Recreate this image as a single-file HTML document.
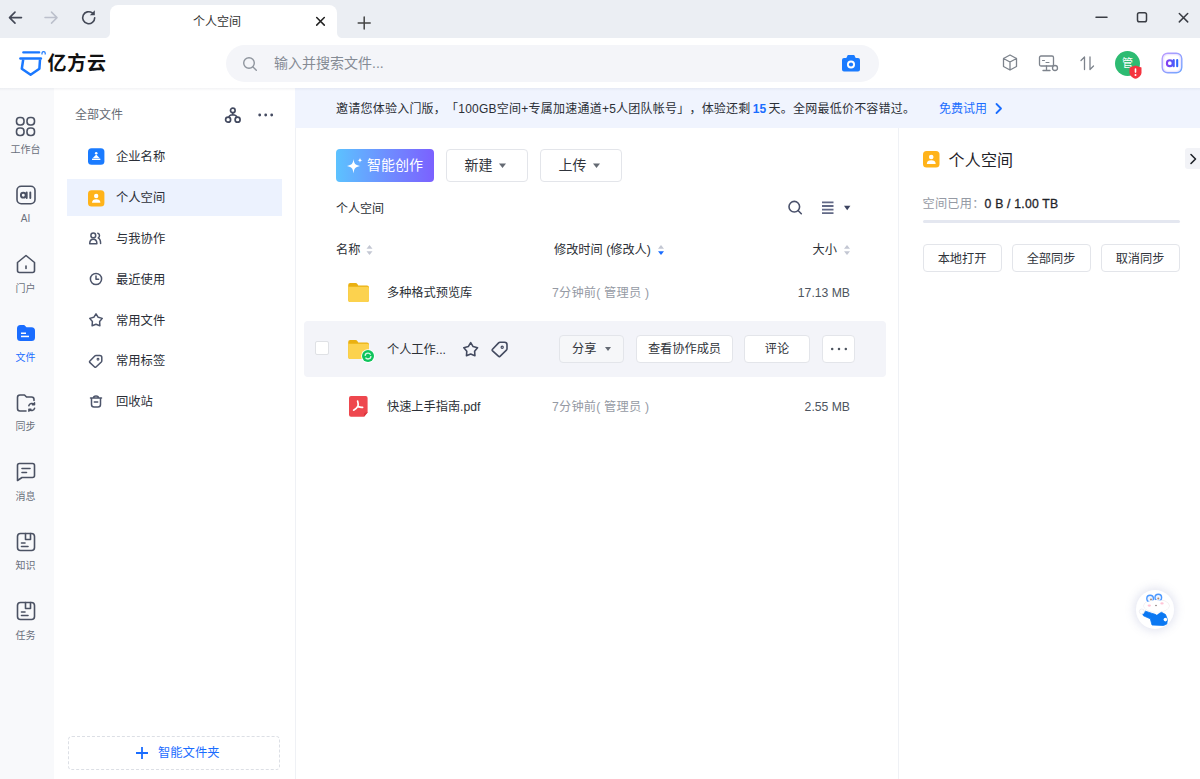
<!DOCTYPE html>
<html lang="zh-CN">
<head>
<meta charset="utf-8">
<title>个人空间</title>
<style>
*{box-sizing:border-box;margin:0;padding:0}
html,body{width:1200px;height:779px;overflow:hidden;background:#fff}
body{text-spacing-trim:space-all;font-family:"Liberation Sans","Noto Sans CJK SC",sans-serif;font-size:12px;color:#1f2329;position:relative}
.abs,.abs-all>*{position:absolute}
svg{position:absolute;overflow:visible}
#chrome{left:0;top:0;width:1200px;height:38px;background:#ebeef3}
#tab{left:110px;top:5px;width:227px;height:33px;background:#fff;border-radius:8px 8px 0 0}
#tab .t{left:0;width:214px;top:9px;text-align:center;font-size:12px;color:#333;line-height:16px}
#header{left:0;top:38px;width:1200px;height:50px;background:#fff}
#logo-t{left:47.500px;top:50.300px;font-size:19px;line-height:28px;font-weight:700;color:#111;letter-spacing:.700px}
#search{left:226px;top:45px;width:653px;height:36.500px;border-radius:19px;background:#f4f5f9}
#search .ph{left:48px;top:9px;font-size:14px;color:#858b95;line-height:18px}
#rail{left:0;top:88px;width:54px;height:691px;background:#f8f9fb}
.rl{left:-1.500px;width:54px;text-align:center;font-size:10px;color:#6a707c;line-height:12px}
.rl.on{color:#1a6dff}
#side{left:54px;top:88px;width:241.500px;height:691px;background:#fff;border-right:1px solid #eff1f5}
#side .hd{left:21px;top:19px;font-size:12px;line-height:16px;color:#646a73}
.si{left:13px;width:215px;height:37px}
.si.on{background:#ecf2fe}
.si .tx{left:49px;top:10px;font-size:12.300px;line-height:18px;color:#2b2f38}
#smart{left:14px;top:647.500px;width:211.500px;height:34px;border:1px dashed #dcdfe5;border-radius:4px}
#smart .tx{left:89px;top:7px;font-size:12.300px;line-height:18px;color:#1a6dff}
#banner{left:295px;top:88px;width:905px;height:39.500px;background:#f0f4fe}
#banner .tx{left:41px;top:12.500px;font-size:12px;line-height:16px;color:#2b2f36;white-space:nowrap;letter-spacing:.230px}
#banner .tx b{font-weight:700;color:#1a6dff;margin:0 -1.500px}
#banner .lk{left:644px;top:12.500px;font-size:12px;line-height:16px;color:#1a6dff}
#main{left:296px;top:128px;width:602px;height:651px;background:#fff}
#right{left:897.500px;top:128px;width:302.500px;height:651px;background:#fff;border-left:1px solid #eff1f5}
.btn{border:1px solid #e3e5ea;border-radius:4px;background:#fff;font-size:12px;color:#30343b;text-align:center;white-space:nowrap}

.tx12{font-size:12px;line-height:18px;white-space:nowrap}
.tx11{font-size:12.200px;line-height:16px;white-space:nowrap;color:#2b2f36;margin-top:.600px}
.tx11.g{color:#959aa4;letter-spacing:.220px}
</style>
</head>
<body>
<div id="chrome" class="abs"></div>
<div id="tab" class="abs"><div class="t abs">个人空间</div></div>
<svg style="left:104px;top:32px" width="240" height="6" fill="#fff"><path d="M0 6H6V0C6 4 4 6 0 6Z"/><path d="M239 6H233V0C233 4 235 6 239 6Z"/></svg>
<!-- nav arrows -->
<svg style="left:0;top:0" width="1200" height="38" fill="none" stroke-linecap="round" stroke-linejoin="round">
 <path d="M21.500 17.600H9.500M15 12.100L9.500 17.600L15 23.100" stroke="#434856" stroke-width="1.600"/>
 <path d="M45 17.600H57M51.500 12.100L57 17.600L51.500 23.100" stroke="#bcc0cc" stroke-width="1.500"/>
 <path d="M94.700 17.700A6 6 0 1 1 92.300 12.900" stroke="#434856" stroke-width="1.600"/><path d="M94.800 10.200V15.200H89.800Z" fill="#434856" stroke="none"/>
 <path d="M316.700 17.500L324.300 25.100M324.300 17.500L316.700 25.100" stroke="#222" stroke-width="1.500"/>
 <path d="M358.200 23H370.200M364.200 17V29" stroke="#444" stroke-width="1.500"/>
 <path d="M1096 17.300H1107" stroke="#3a3d44" stroke-width="1.500"/>
 <rect x="1137.500" y="12.700" width="9" height="9" rx="1.800" stroke="#3a3d44" stroke-width="1.500"/>
 <path d="M1179.300 13.500L1187.700 21.900M1187.700 13.500L1179.300 21.900" stroke="#3a3d44" stroke-width="1.500"/>
</svg>
<div id="header" class="abs"></div>
<!-- logo -->
<svg style="left:18px;top:50.400px" width="30" height="28" viewBox="0 0 30 28" fill="none" stroke="#1a78ff">
 <path d="M5.300 2.400H21.200" stroke-width="2.300" stroke-linecap="round"/>
 <path d="M24 4.500V3Q24 1.600 25.600 1.600Q27.200 1.600 27.200 3V4.500" stroke-width="1.200"/>
 <path d="M2.400 8.500H22.900" stroke-width="2.400" stroke-linecap="round"/>
 <path d="M5.200 9.500L3.800 18.700L12.600 24.700L21.400 18.700L22 9.500" stroke-width="2.500" stroke-linejoin="round"/>
</svg>
<div id="logo-t" class="abs">亿方云</div>
<div id="search" class="abs"><div class="ph abs">输入并搜索文件...</div>
 <svg style="left:16px;top:11px" width="16" height="16" fill="none" stroke="#8f959e" stroke-width="1.400" stroke-linecap="round"><circle cx="7" cy="7" r="5.300"/><path d="M11 11L14.300 14.300"/></svg>
 <svg style="left:615px;top:9px" width="20" height="19" viewBox="0 0 20 19"><path d="M6.800 1h6.400l1.500 3H17a2 2 0 0 1 2 2v9.500a2 2 0 0 1-2 2H3a2 2 0 0 1-2-2V6a2 2 0 0 1 2-2h2.300z" fill="#1a7bff"/><circle cx="10" cy="10.500" r="4" fill="#fff"/><circle cx="10" cy="10.500" r="2.100" fill="#1a7bff"/></svg>
</div>
<!-- header right icons -->
<svg style="left:1000px;top:52px" width="190" height="24" fill="none" stroke="#7d838c" stroke-width="1.300" stroke-linejoin="round" stroke-linecap="round">
 <path d="M10 3L16.500 6.500V14.500L10 18L3.500 14.500V6.500ZM3.500 6.500L10 10L16.500 6.500M10 10V18"/>
 <rect x="39.500" y="4" width="14" height="10" rx="1.500"/><path d="M43 18.500H50M46.500 14V18.500"/><path d="M42.500 8.500H44.500M46 10.500H49" stroke-width="1"/><circle cx="55" cy="16" r="2.500" fill="#fff"/>
 <path d="M84.500 17.500V5L81 8.500M90 5V17.500L93.500 14"/>
</svg>
<div class="abs" style="left:1115px;top:51px;width:25px;height:25px;border-radius:50%;background:#2dbb72;color:#fff;font-size:11px;line-height:25px;text-align:center">管</div>
<svg style="left:1129px;top:65px" width="13" height="14" viewBox="0 0 13 14"><path d="M6.500 0.500L12.500 2.500V7.500C12.500 10.500 9.500 13 6.500 13.800C3.500 13 0.500 10.500 0.500 7.500V2.500Z" fill="#f5333f"/><rect x="5.700" y="3.300" width="1.600" height="4.600" rx=".8" fill="#fff"/><circle cx="6.500" cy="10" r="1" fill="#fff"/></svg>
<svg style="left:1161px;top:52px" width="22" height="22" viewBox="0 0 22 22">
 <defs><linearGradient id="aig" x1="0" y1="0" x2="22" y2="22" gradientUnits="userSpaceOnUse"><stop offset="0" stop-color="#c19bff"/><stop offset="1" stop-color="#6aa6ff"/></linearGradient>
 <linearGradient id="aig2" x1="5" y1="0" x2="17" y2="0" gradientUnits="userSpaceOnUse"><stop offset="0" stop-color="#8a3cf0"/><stop offset="1" stop-color="#2a6bff"/></linearGradient></defs>
 <rect x="1.200" y="1.200" width="19.600" height="19.600" rx="5.500" fill="#efe8ff" stroke="url(#aig)" stroke-width="1.400"/>
 <rect x="3.300" y="3.300" width="15.400" height="15.400" rx="4" fill="#fff"/>
 <circle cx="8.800" cy="11.200" r="2.900" fill="none" stroke="url(#aig2)" stroke-width="2.100"/><path d="M12.700 8V14.300M16.200 8V14.300" stroke="url(#aig2)" stroke-width="2.100" stroke-linecap="round"/>
</svg>

<!-- rail -->
<div id="rail" class="abs abs-all">
 <div class="rl" style="top:55.5px">工作台</div>
 <div class="rl" style="top:124.5px">AI</div>
 <div class="rl" style="top:194.5px">门户</div>
 <div class="rl on" style="top:263.500px">文件</div>
 <div class="rl" style="top:332.5px">同步</div>
 <div class="rl" style="top:402.5px">消息</div>
 <div class="rl" style="top:471.5px">知识</div>
 <div class="rl" style="top:541.5px">任务</div>
 <svg style="left:-1.500px;top:0" width="54" height="691" fill="none" stroke="#4b5263" stroke-width="1.600" stroke-linejoin="round" stroke-linecap="round">
  <!-- workbench -->
  <g><rect x="17.500" y="29.500" width="7.500" height="7.500" rx="3.200"/><rect x="28" y="29.500" width="7.500" height="7.500" rx="3.200"/><rect x="17.500" y="40" width="7.500" height="7.500" rx="3.200"/><rect x="28" y="40" width="7.500" height="7.500" rx="3.200"/></g>
  <!-- AI -->
  <g><rect x="18" y="98.300" width="18" height="17.400" rx="4.200"/><circle cx="24.300" cy="107.200" r="2.400" stroke-width="1.900"/><path d="M27.700 104.500V110M31.300 104.500V110" stroke-width="1.900"/></g>
  <!-- portal -->
  <g><path d="M18.500 174.500L27 167.500L35.500 174.500V182.500A2 2 0 0 1 33.500 184.500H20.500A2 2 0 0 1 18.500 182.500Z"/><path d="M27 178V180.500"/></g>
  <!-- file active -->
  <g stroke="none" fill="#1a6dff"><path d="M18 240.500A3.500 3.500 0 0 1 21.500 237H25.200L27.500 239.300H32.500A3.500 3.500 0 0 1 36 242.800V249.500A3.500 3.500 0 0 1 32.500 253H21.500A3.500 3.500 0 0 1 18 249.500Z"/><rect x="22" y="244.500" width="5" height="1.500" fill="#fff"/><rect x="22" y="247.700" width="8" height="1.500" fill="#fff"/></g>
  <!-- sync -->
  <g><path d="M35 312.500V311.500A2.500 2.500 0 0 0 32.500 309H27.500L25.500 307H21A2.500 2.500 0 0 0 18.500 309.500V320.500A2.500 2.500 0 0 0 21 323H27"/><path d="M29.800 317.800A3.200 3.200 0 0 1 35.300 316.500M35.500 314.800V316.800H33.500M35.600 320.200A3.200 3.200 0 0 1 30.100 321.500M29.900 323.200V321.200H31.900" stroke-width="1.500"/></g>
  <!-- message -->
  <g><path d="M20.500 375.500H33.500A2 2 0 0 1 35.500 377.500V387.500A2 2 0 0 1 33.500 389.500H23L18.500 392.500V377.500A2 2 0 0 1 20.500 375.500Z"/><path d="M23 380.500H31M23 384.500H27.500"/></g>
  <!-- knowledge -->
  <g><rect x="18.500" y="445.500" width="17" height="17" rx="3"/><path d="M26.500 445.500V451.500H31.500V445.500M22.500 455H26M22.500 458.500H29"/></g>
  <!-- task -->
  <g><rect x="18.500" y="514.500" width="17" height="17" rx="3"/><path d="M26.500 514.500V520.500H31.500V514.500M22.500 524H26M22.500 527.500H29"/></g>
 </svg>
</div>

<!-- sidebar -->
<div id="side" class="abs abs-all">
 <div class="hd">全部文件</div>
 <svg style="left:170px;top:18px" width="52" height="18" fill="none" stroke="#434a60" stroke-width="1.700"><circle cx="8.800" cy="4.400" r="2.300"/><circle cx="4.100" cy="13.700" r="2.500"/><circle cx="13.600" cy="13.700" r="2.500"/><path d="M8.800 6.700V8.800M8.800 8.800C6 9 5 10 4.800 11.300M8.800 8.800C11.600 9 12.600 10 12.900 11.300" stroke-width="1.500"/><g fill="#434a60" stroke="none"><circle cx="35.700" cy="9" r="1.400"/><circle cx="41.700" cy="9" r="1.400"/><circle cx="47.700" cy="9" r="1.400"/></g></svg>
 <div class="si" style="top:50px"><div class="tx abs">企业名称</div></div>
 <div class="si on" style="top:91px"><div class="tx abs">个人空间</div></div>
 <div class="si" style="top:132px"><div class="tx abs">与我协作</div></div>
 <div class="si" style="top:173px"><div class="tx abs">最近使用</div></div>
 <div class="si" style="top:214px"><div class="tx abs">常用文件</div></div>
 <div class="si" style="top:254px"><div class="tx abs">常用标签</div></div>
 <div class="si" style="top:295px"><div class="tx abs">回收站</div></div>
 <svg style="left:0;top:0" width="241" height="691" fill="none" stroke="#4d556b" stroke-width="1.500" stroke-linejoin="round" stroke-linecap="round">
  <!-- enterprise -->
  <g stroke="none" transform="translate(0,.300)"><rect x="34" y="60" width="16.400" height="16.400" rx="3.500" fill="#1a7bff"/><circle cx="42.200" cy="65" r="1.300" fill="#fff"/><path d="M42.200 66.300L45.500 69.800H38.900Z" fill="#fff"/><rect x="38" y="70.300" width="8.400" height="1.400" rx=".5" fill="#fff"/></g>
  <!-- personal -->
  <g stroke="none" transform="translate(0,1.200)"><rect x="34" y="101" width="16.400" height="16.400" rx="3.500" fill="#ffb31a"/><circle cx="42.200" cy="106.800" r="2.200" fill="#fff"/><path d="M38 113.500C38 111 39.700 110 42.200 110C44.700 110 46.400 111 46.400 113.500Z" fill="#fff"/></g>
  <!-- collab -->
  <g><circle cx="39.300" cy="147.400" r="2.400"/><path d="M35.700 155.800C35.700 152.300 37.300 151.300 39.300 151.300C41.300 151.300 42.900 152.300 42.900 155.800Z"/><path d="M43.800 145.200C46 145.700 46 149 44.200 149.900C46 150.800 46.600 152.800 46.600 155.600"/></g>
  <!-- recent -->
  <g><circle cx="42" cy="191" r="5.600"/><path d="M42 188V191.300H44.600"/></g>
  <!-- star -->
  <path d="M42.00 225.80L44.23 229.33L48.28 230.36L45.61 233.57L45.88 237.74L42.00 236.20L38.12 237.74L38.39 233.57L35.72 230.36L39.77 229.33Z"/>
  <!-- tag -->
  <g><path d="M35.700 273.200L40.800 267.900Q41.300 267.400 42 267.400H45.800Q47.800 267.400 47.800 269.400V272.800Q47.800 273.500 47.300 274L42 279Q41.300 279.600 40.600 279L35.700 274.400Q35.200 273.800 35.700 273.200Z"/><circle cx="44" cy="271.300" r=".9" stroke-width="1.100"/></g>
  <!-- trash -->
  <g><path d="M36.500 310H47.500M39.500 310C39.500 307.300 44.500 307.300 44.500 310M37.500 310V316.500A2.500 2.500 0 0 0 40 319H44A2.500 2.500 0 0 0 46.500 316.500V310M40.300 314H43.700"/></g>
 </svg>
 <div id="smart"><div class="tx abs">智能文件夹</div>
  <svg style="left:66.500px;top:10px" width="12" height="12" stroke="#1a6dff" stroke-width="1.800" fill="none"><path d="M6 0V12M0 6H12"/></svg>
 </div>
</div>

<!-- banner -->
<div id="banner" class="abs"><div class="tx abs">邀请您体验入门版，「100GB空间+专属加速通道+5人团队帐号」，体验还剩 <b>15</b> 天。全网最低价不容错过。</div>
 <div class="lk abs">免费试用</div>
 <svg style="left:700px;top:15px" width="8" height="11" fill="none" stroke="#1a6dff" stroke-width="1.800" stroke-linecap="round" stroke-linejoin="round"><path d="M1.500 1L6 5.500L1.500 10"/></svg>
</div>

<!-- main -->
<div id="main" class="abs abs-all">
 <div style="left:40px;top:21px;width:98px;height:32.500px;border-radius:4px;background:linear-gradient(90deg,#5cc2ff,#6f8bff 55%,#7b61ff);color:#fff;font-size:14px;line-height:32px;padding-left:31px;white-space:nowrap">智能创作</div>
 <svg style="left:50px;top:29px" width="18" height="18" fill="#fff"><path d="M7.500 2C8.200 7 9 7.800 14 9C9 10.200 8.200 11 7.500 16.500C6.800 11 6 10.200 1 9C6 7.800 6.800 7 7.500 2Z"/><path d="M14 0.500C14.300 2.500 14.700 2.900 16.500 3.200C14.700 3.500 14.300 3.900 14 5.900C13.700 3.900 13.300 3.500 11.500 3.200C13.300 2.900 13.700 2.500 14 0.500Z"/></svg>
 <div class="btn" style="left:150px;top:21px;width:82px;height:32.500px;font-size:14px;line-height:30px;padding-right:17px">新建</div>
 <div class="btn" style="left:244px;top:21px;width:82px;height:32.500px;font-size:14px;line-height:30px;padding-right:17px">上传</div>
 <svg style="left:0;top:0" width="602" height="300" fill="#646a73"><path d="M203 35.500H210L206.500 40Z"/><path d="M297 35.500H304L300.500 40Z"/><path d="M548 77.700H554.400L551.200 82.300Z" fill="#3d4460"/><path d="M314 219.500H320L317 223.500Z"/></svg>
 <div class="tx11" style="left:40px;top:72px;font-size:12px">个人空间</div>
 <svg style="left:491px;top:71px" width="50" height="18" fill="none" stroke="#4a516b" stroke-width="1.600" stroke-linecap="round"><circle cx="7.300" cy="7.700" r="5.300"/><path d="M11.300 11.700L14.300 14.700"/><path d="M35 3.400H46.500M35 7H46.500M35 10.600H46.500M35 14.200H46.500" stroke="#626986" stroke-width="1.800" stroke-linecap="butt"/></svg>
 <div class="tx11" style="left:40px;top:113px">名称</div>
 <div class="tx11" style="left:258px;top:113px">修改时间 (修改人)</div>
 <div class="tx11" style="left:516.500px;top:113px">大小</div>
 <svg style="left:0;top:113.500px" width="602" height="16"><path d="M70.5 6.800L73.5 3L76.5 6.800Z" fill="#c3c7d3"/><path d="M70.5 9.200L73.5 13L76.5 9.200Z" fill="#c3c7d3"/><path d="M548.0 6.800L551.0 3L554.0 6.800Z" fill="#c3c7d3"/><path d="M548.0 9.200L551.0 13L554.0 9.200Z" fill="#c3c7d3"/><path d="M362.0 6.800L365.0 3L368.0 6.800Z" fill="#c3c7d3"/><path d="M362.0 9.200L365.0 13L368.0 9.200Z" fill="#1a6dff"/></svg>

 <!-- row1 -->
 <svg style="left:52px;top:153.700px" width="22" height="21"><path d="M0.200 3A2 2 0 0 1 2.200 1H7.500Q8.800 1 9.500 2.200L10.300 3.600H19A2 2 0 0 1 21 5.600V18A2 2 0 0 1 19 20H2.200A2 2 0 0 1 0.200 18Z" fill="#eab010"/><path d="M0.200 4.800H19.500A1.500 1.500 0 0 1 21 6.300V18A2 2 0 0 1 19 20H2.200A2 2 0 0 1 0.200 18Z" fill="#fcd24e"/></svg>
 <div class="tx11" style="left:91px;top:156px">多种格式预览库</div>
 <div class="tx11 g" style="left:256px;top:156px">7分钟前( 管理员 )</div>
 <div class="tx11" style="left:454px;top:156px;width:100px;text-align:right;color:#4e5560">17.13 MB</div>

 <!-- row2 -->
 <div style="left:8px;top:193px;width:582px;height:56px;background:#f3f4f9;border-radius:4px"></div>
 <div style="left:19px;top:213px;width:14px;height:14px;border:1px solid #dfe1e5;border-radius:2px;background:#fff"></div>
 <svg style="left:52px;top:211px" width="28" height="26"><path d="M0.200 3A2 2 0 0 1 2.200 1H7.500Q8.800 1 9.500 2.200L10.300 3.600H19A2 2 0 0 1 21 5.600V18A2 2 0 0 1 19 20H2.200A2 2 0 0 1 0.200 18Z" fill="#eab010"/><path d="M0.200 4.800H19.500A1.500 1.500 0 0 1 21 6.300V18A2 2 0 0 1 19 20H2.200A2 2 0 0 1 0.200 18Z" fill="#fcd24e"/><circle cx="20" cy="17.100" r="6.900" fill="#fff"/><circle cx="20" cy="17.100" r="6" fill="#0fc45c"/><circle cx="20" cy="17.100" r="2.900" fill="none" stroke="#d8f8e6" stroke-width="1.300" stroke-dasharray="7.300 1.800"/></svg>
 <div class="tx11" style="left:91px;top:213px">个人工作...</div>
 <svg style="left:166px;top:212px" width="50" height="20" fill="none" stroke="#434a60" stroke-width="1.600" stroke-linejoin="round" stroke-linecap="round"><path d="M8.70 2.70L11.11 6.58L15.55 7.68L12.60 11.17L12.93 15.72L8.70 14.00L4.47 15.72L4.80 11.17L1.85 7.68L6.29 6.58Z"/><path d="M30.300 9.500L36.600 2.900Q37.200 2.300 38 2.300H42.500Q45 2.300 45 4.800V8.800Q45 9.600 44.400 10.200L38 16.300Q37.200 17 36.400 16.200L30.300 10.600Q29.800 10 30.300 9.500Z"/><circle cx="40.200" cy="7.200" r="1.100" stroke-width="1.200"/></svg>
 <div class="btn" style="left:262.500px;top:207px;width:65.500px;height:28px;font-size:12.200px;line-height:27px;padding-right:14px;background:#f6f7f9">分享</div>
 <div class="btn" style="left:340px;top:207px;width:97px;height:28px;font-size:12.200px;line-height:27px">查看协作成员</div>
 <div class="btn" style="left:448px;top:207px;width:66px;height:28px;font-size:12.200px;line-height:27px">评论</div>
 <div class="btn" style="left:526px;top:207px;width:33px;height:28px"></div>
 <svg style="left:526.500px;top:207px" width="32" height="28" fill="#4e5560"><circle cx="9.200" cy="14" r="1.250"/><circle cx="16" cy="14" r="1.250"/><circle cx="22.800" cy="14" r="1.250"/><path d="M-218 12H-212L-215 16Z" fill="#646a73"/></svg>

 <!-- row3 -->
 <svg style="left:53px;top:268.300px" width="19" height="21" viewBox="0 0 19 21"><path d="M2 0H16.600A2 2 0 0 1 18.600 2V16.500L15 20.700H2A2 2 0 0 1 0 18.700V2A2 2 0 0 1 2 0Z" fill="#ee474e"/><path d="M18.600 16.500H16.500A1.500 1.500 0 0 0 15 18V20.700Z" fill="#d9363d"/><path d="M8.600 5C9.400 7.500 9.300 8.800 8.900 10.200C8 12 6.500 13.200 4.600 14.200M8.900 10.200C10.500 11.200 12 11.600 13.600 11.400" fill="none" stroke="#fff" stroke-width="1.700" stroke-linecap="round"/></svg>
 <div class="tx11" style="left:91px;top:270px">快速上手指南.pdf</div>
 <div class="tx11 g" style="left:256px;top:270px">7分钟前( 管理员 )</div>
 <div class="tx11" style="left:454px;top:270px;width:100px;text-align:right;color:#4e5560">2.55 MB</div>
</div>

<!-- right panel -->
<div id="right" class="abs abs-all">
 <svg style="left:24px;top:23px" width="17" height="17"><rect width="16.500" height="16.500" rx="3.500" fill="#ffb31a"/><circle cx="8.250" cy="6" r="2.300" fill="#fff"/><path d="M3.800 13C3.800 10.300 5.600 9.300 8.250 9.300C10.900 9.300 12.700 10.300 12.700 13Z" fill="#fff"/></svg>
 <div style="left:50px;top:21.800px;font-size:16px;line-height:22px;color:#1f2329;white-space:nowrap;letter-spacing:.200px">个人空间</div>
 <div style="left:286px;top:20px;width:16px;height:21px;background:#f2f3f7;border-radius:3px 0 0 3px"></div>
 <svg style="left:289px;top:25px" width="10" height="12" fill="none" stroke="#1f2329" stroke-width="1.600" stroke-linecap="round" stroke-linejoin="round"><path d="M3 1.500L7.500 6L3 10.500"/></svg>
 <div class="tx11 g" style="left:24px;top:67.500px">空间已用：<span style="color:#1f2329;-webkit-text-stroke:.300px #1f2329">0 B / 1.00 TB</span></div>
 <div style="left:24px;top:92px;width:257px;height:3px;border-radius:2px;background:#e4e7f0"></div>
 <div class="btn" style="left:24px;top:116px;width:79px;height:28px;font-size:12.200px;line-height:29px">本地打开</div>
 <div class="btn" style="left:113px;top:116px;width:79px;height:28px;font-size:12.200px;line-height:29px">全部同步</div>
 <div class="btn" style="left:202px;top:116px;width:79px;height:28px;font-size:12.200px;line-height:29px">取消同步</div>
</div>

<div class="abs" style="left:0;top:88px;width:1200px;height:3px;background:linear-gradient(rgba(40,50,90,.06),rgba(40,50,90,0))"></div>
<!-- mascot -->
<div class="abs" style="left:1135.600px;top:590.300px;width:38.600px;height:38.600px;border-radius:50%;background:#fff;box-shadow:0 0 10px 2px rgba(110,120,180,.20)"></div>
<svg style="left:1120px;top:575px" width="70" height="70" viewBox="0 0 70 70">
 <ellipse cx="36.500" cy="30.800" rx="12.800" ry="6.300" fill="#fff" stroke="#ebe6e8" stroke-width=".7"/>
 <circle cx="30.100" cy="23.600" r="3.300" fill="#eef4ff" stroke="#4a98ff" stroke-width="1.400"/><circle cx="38.300" cy="22.600" r="3.300" fill="#eef4ff" stroke="#4a98ff" stroke-width="1.400"/>
 <circle cx="31" cy="24.500" r="1" fill="#b08a70"/><circle cx="38.300" cy="23.600" r="1" fill="#b08a70"/>
 <ellipse cx="36.500" cy="31" rx="12.300" ry="5.900" fill="#fff"/>
 <ellipse cx="29.300" cy="30.600" rx="1.700" ry="1.100" fill="#ffc4d6"/><ellipse cx="42" cy="28.400" rx="1.700" ry="1.100" fill="#ffc4d6"/>
 <ellipse cx="36" cy="30.500" rx="1" ry=".7" fill="#9a9090"/>
 <path d="M22.500 38.500L25.500 36.200L31.500 38.200L36.800 39.800L41.500 37.300L45.500 39.500L47.400 44.500L46.800 49L43.500 50.500L32 50L30.300 43.800L23.500 40.800Z" fill="#0b78f2" stroke="#0b78f2" stroke-width=".8" stroke-linejoin="round"/>
 <path d="M34.500 37.500L36.800 40L39.500 37.500Z" fill="#fff"/>
 <circle cx="21.800" cy="36.500" r="2.500" fill="#fff" stroke="#e3e3ea" stroke-width=".6"/><circle cx="45.400" cy="44.600" r="1.800" fill="#fff"/>
</svg>
</body>
</html>
